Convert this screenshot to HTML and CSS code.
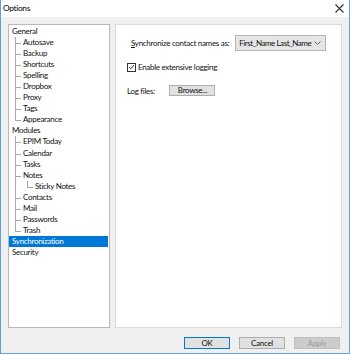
FILE: index.html
```html
<!DOCTYPE html>
<html>
<head>
<meta charset="utf-8">
<link rel="stylesheet" href="styles.css">
</head>
<body>
<div class="window">
  <div class="titlebar">
    <span class="title">Options</span>
    <svg class="close" width="9" height="9" viewBox="0 0 9 9"><path d="M0.5 0.5 L8.5 8.5 M8.5 0.5 L0.5 8.5" stroke="#333" stroke-width="1.1"/></svg>
  </div>
  <div class="body">
    <div class="tree">
      <div class="row root">General</div>
      <div class="row child">Autosave</div>
      <div class="row child">Backup</div>
      <div class="row child">Shortcuts</div>
      <div class="row child">Spelling</div>
      <div class="row child">Dropbox</div>
      <div class="row child">Proxy</div>
      <div class="row child">Tags</div>
      <div class="row child last">Appearance</div>
      <div class="row root">Modules</div>
      <div class="row child">EPIM Today</div>
      <div class="row child">Calendar</div>
      <div class="row child">Tasks</div>
      <div class="row child">Notes</div>
      <div class="row grand">Sticky Notes</div>
      <div class="row child">Contacts</div>
      <div class="row child">Mail</div>
      <div class="row child">Passwords</div>
      <div class="row child last">Trash</div>
      <div class="row root selected">Synchronization</div>
      <div class="row root">Security</div>
    </div>
    <div class="panel">
      <div class="line sync">
        <span class="label"><u>S</u>ynchronize contact names as:</span>
        <div class="select">
          <span class="value">First_Name Last_Name</span>
          <svg width="7" height="4" viewBox="0 0 7 4"><path d="M0.5 0.5 L3.5 3.5 L6.5 0.5" fill="none" stroke="#555" stroke-width="0.9"/></svg>
        </div>
      </div>
      <div class="line check">
        <span class="box"><svg width="8" height="8" viewBox="0 0 8 8"><path d="M1.3 4.2 L3.2 6 L6.8 1.8" fill="none" stroke="#222" stroke-width="1"/></svg></span>
        <span class="label">Enable extensive logging</span>
      </div>
      <div class="line logs">
        <span class="label">Log files:</span>
        <span class="browse">Browse...</span>
      </div>
    </div>
  </div>
  <div class="footer">
    <span class="btn ok">OK</span>
    <span class="btn">Cancel</span>
    <span class="btn disabled">Apply</span>
  </div>
</div>
</body>
</html>
```
FILE: styles.css
```css
* { box-sizing: border-box; }
html, body { margin: 0; padding: 0; }
body {
  width: 350px;
  height: 354px;
  font-family: Lato, "Noto Sans", sans-serif;
  font-size: 8px;
  letter-spacing: -0.3px;
  color: #111;
  overflow: hidden;
}
.window {
  width: 350px;
  height: 354px;
  background: #f0f0f0;
  border-left: 1px solid #5ea2e0;
  border-right: 1px solid #5ea2e0;
  border-bottom: 1px solid #5ea2e0;
  display: flex;
  flex-direction: column;
}
.titlebar {
  height: 17px;
  background: #fff;
  display: flex;
  align-items: center;
  justify-content: space-between;
  padding: 0 5px 1px 2px;
  flex: none;
}
.title { font-size: 8.3px; color: #000; }
.body {
  flex: none;
  display: flex;
  gap: 5px;
  padding: 7px 7px 0 7px;
  height: 311px;
}
.tree {
  width: 102px;
  height: 304px;
  background: #fff;
  border: 1px solid #b9b9b9;
  padding-top: 0.5px;
}
.row {
  height: 11.1px;
  line-height: 11.1px;
  white-space: nowrap;
  background-repeat: no-repeat;
}
.root { padding-left: 3px; }
.child {
  padding-left: 14px;
  background-image: linear-gradient(#a8a8a8, #a8a8a8), linear-gradient(#a8a8a8, #a8a8a8);
  background-size: 1px 100%, 6px 1px;
  background-position: 6px 0, 6px 6px;
}
.child.last {
  background-size: 1px 6px, 6px 1px;
}
.grand {
  padding-left: 26px;
  background-image: linear-gradient(#a8a8a8, #a8a8a8), linear-gradient(#a8a8a8, #a8a8a8), linear-gradient(#a8a8a8, #a8a8a8);
  background-size: 1px 100%, 1px 6px, 6px 1px;
  background-position: 6px 0, 18px 0, 18px 6px;
}
.selected {
  background: #0078d7;
  color: #fff;
  margin-right: 1px;
}
.panel {
  width: 227px;
  height: 304px;
  background: #fff;
  border: 1px solid #dadada;
  padding: 10px 0 0 11px;
  white-space: nowrap;
}
.line { display: flex; align-items: center; }
.sync { height: 16px; padding-left: 4px; gap: 6px; }
.select {
  width: 91px;
  height: 16px;
  background: #e5e5e5;
  border: 1px solid #b5b5b5;
  display: flex;
  align-items: center;
  justify-content: space-between;
  padding: 0 4px 0 3px;
  flex: none;
}
.value { letter-spacing: -0.45px; }
.check { margin-top: 11px; gap: 2px; }
.box {
  width: 9px;
  height: 9px;
  border: 1px solid #333;
  background: #fff;
  display: flex;
  align-items: center;
  justify-content: center;
  flex: none;
}
.logs { margin-top: 13px; gap: 14px; }
.browse {
  width: 46px;
  height: 11px;
  background: #e1e1e1;
  border: 1px solid #adadad;
  line-height: 9px;
  padding-left: 8px;
  flex: none;
}
.footer {
  display: flex;
  justify-content: flex-end;
  gap: 9px;
  padding: 9px 9px 0 0;
}
.btn {
  width: 46px;
  height: 12px;
  background: #e1e1e1;
  border: 1px solid #adadad;
  text-align: center;
  line-height: 10px;
}
.btn.ok { border-color: #0078d7; }
.btn.disabled { background: #cccccc; border-color: #bfbfbf; color: #9a9a9a; }
```
